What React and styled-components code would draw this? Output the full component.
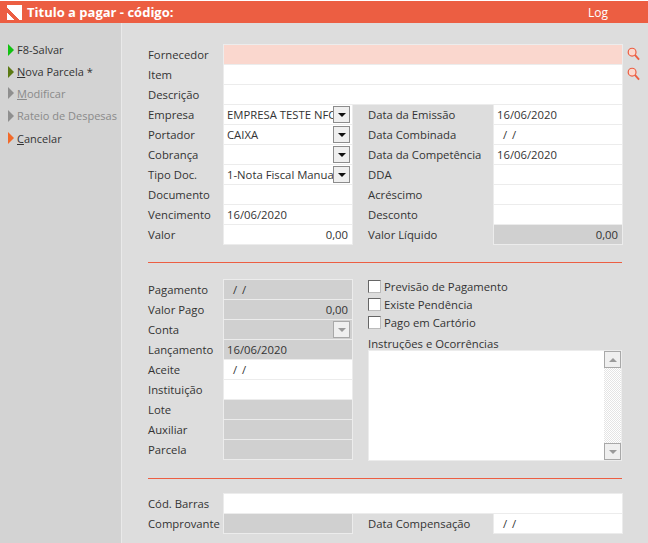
import React from 'react'
import styled, { createGlobalStyle } from 'styled-components'

const GlobalStyle = createGlobalStyle`
  html, body { margin: 0; padding: 0; background: #dddddd; }
  body { font-family: "Open Sans", "Liberation Sans", sans-serif; font-size: 11.3px; color: #333; }
`

const Page = styled.div`
  width: 648px;
  height: 543px;
  overflow: hidden;
  display: flex;
  flex-direction: column;
  padding-top: 1px;
  box-sizing: border-box;
  background: #fff;
`

const Header = styled.header`
  height: 22px;
  flex: none;
  background: #ec5e42;
  color: #fff;
  display: flex;
  align-items: center;
  padding: 0 40px 0 7px;
`

const HeaderTitle = styled.div`
  margin-left: 5px;
  flex: 1;
  font-weight: 700;
  font-size: 13px;
`

const HeaderLink = styled.div`
  font-size: 12px;
`

const Body = styled.div`
  flex: 1;
  display: flex;
  background: #dddddd;
`

const Sidebar = styled.nav`
  width: 121px;
  flex: none;
  background: #d3d3d3;
  border-right: 1px solid #e9e9e9;
  padding-top: 15px;
  font-size: 11px;
`

const MenuItem = styled.div`
  height: ${p => p.$height}px;
  display: flex;
  align-items: center;
  gap: 3px;
  padding-left: 8px;
  white-space: nowrap;
  color: ${p => (p.$disabled ? '#8a8a8a' : '#333')};
`

const Arrow = styled.span`
  width: 0;
  height: 0;
  border-style: solid;
  border-width: 6px 0 6px 6px;
  border-color: transparent transparent transparent ${p => p.$color};
`

const Main = styled.main`
  flex: 1;
  padding: 21px 0 0 26px;
`

const FormGrid = styled.div`
  display: grid;
  grid-template-columns: 75px 130px 15px 125px 130px 25px;
  grid-auto-rows: 20px;
`

const Label = styled.div`
  display: flex;
  align-items: center;
  white-space: nowrap;
  grid-column: ${p => p.$col || 'auto'};
`

const Field = styled.div`
  box-sizing: border-box;
  border: 1px solid #ececec;
  margin: 0 0 -1px 0;
  background: ${p => p.$bg || '#fff'};
  grid-column: ${p => p.$col || 'auto'};
  display: flex;
  align-items: center;
  justify-content: ${p => (p.$right ? 'flex-end' : 'flex-start')};
  padding: ${p => (p.$right ? '0 4px 0 0' : '0 0 0 3px')};
  position: relative;
  overflow: hidden;
  white-space: nowrap;
`

const DateMask = styled.span`
  padding-left: 6px;
  word-spacing: 2px;
`

const DropButton = styled.span`
  position: absolute;
  right: 2px;
  top: 1px;
  width: 17px;
  height: 17px;
  box-sizing: border-box;
  border: 1px solid ${p => (p.$disabled ? '#a8a8a8' : '#8c8c8c')};
  background: #efefef;
  display: flex;
  align-items: center;
  justify-content: center;
  &::after {
    content: '';
    border-style: solid;
    border-width: 4px 4px 0 4px;
    border-color: ${p => (p.$disabled ? '#9a9a9a' : '#111')} transparent transparent transparent;
  }
`

const SearchButton = styled.span`
  padding-left: 4px;
  display: flex;
  align-items: center;
  grid-column: 6;
`

const Divider = styled.div`
  width: 474px;
  height: 1px;
  margin: ${p => p.$margin};
  background: #ec5e42;
`

const SplitSection = styled.div`
  display: flex;
  gap: 15px;
`

const LeftGrid = styled.div`
  display: grid;
  grid-template-columns: 75px 130px;
  grid-auto-rows: 20px;
`

const RightColumn = styled.div`
  width: 254px;
  margin-top: -2px;
  display: flex;
  flex-direction: column;
`

const CheckRow = styled.label`
  height: 18px;
  display: flex;
  align-items: center;
  gap: 3px;
`

const CheckBox = styled.span`
  width: 11px;
  height: 11px;
  border: 1px solid;
  border-color: #666 #bbb #bbb #666;
  background: #fff;
  flex: none;
`

const AreaLabel = styled.div`
  margin-top: 4px;
  height: 15px;
  line-height: 17px;
`

const TextArea = styled.div`
  height: 111px;
  box-sizing: border-box;
  border: 1px solid #ececec;
  background: #fff;
  display: flex;
  justify-content: flex-end;
`

const ScrollBar = styled.div`
  width: 17px;
  display: flex;
  flex-direction: column;
  justify-content: space-between;
  background: repeating-conic-gradient(#e4e4e4 0 25%, #fff 0 50%) 0 0 / 2px 2px;
`

const ScrollButton = styled.span`
  height: 17px;
  box-sizing: border-box;
  border: 1px solid #a8a8a8;
  background: #efefef;
  display: flex;
  align-items: center;
  justify-content: center;
  &::after {
    content: '';
    border-style: solid;
    border-width: ${p => (p.$up ? '0 4px 4px 4px' : '4px 4px 0 4px')};
    border-color: ${p => (p.$up ? 'transparent transparent #9a9a9a transparent' : '#9a9a9a transparent transparent transparent')};
  }
`

const DISABLED = '#d0d0d0'
const PINK = '#fad7ce'

function SearchIcon() {
  return (
    <svg width="13" height="14" viewBox="0 0 14 15" fill="none">
      <circle cx="5.5" cy="5.5" r="4.2" fill="#fbd9cf" stroke="#ec5e42" strokeWidth="1.3" />
      <path d="M8.5 8.5 L13 13.5" stroke="#ec5e42" strokeWidth="2" />
    </svg>
  )
}

function Logo() {
  return (
    <svg width="15" height="15" viewBox="0 0 15 15" shapeRendering="crispEdges">
      <rect width="15" height="15" fill="#fff" />
      <path d="M0 3 L1 3 L1 4 L2 4 L2 5 L3 5 L3 6 L4 6 L4 7 L5 7 L5 8 L6 8 L6 9 L7 9 L7 10 L8 10 L8 11 L9 11 L9 12 L10 12 L10 13 L11 13 L11 14 L12 14 L12 15 L7 15 L0 8 Z" fill="#ec5e42" />
    </svg>
  )
}

const MENU = [
  { key: 'save', color: '#12c212', text: 'F8-Salvar', height: 23 },
  { key: 'new', color: '#5c7a14', first: 'N', text: 'ova Parcela *', height: 21 },
  { key: 'edit', color: '#8f8f8f', first: 'M', text: 'odificar', disabled: true, height: 22 },
  { key: 'split', color: '#8f8f8f', text: 'Rateio de Despesas', disabled: true, height: 23 },
  { key: 'cancel', color: '#f26a2a', first: 'C', text: 'ancelar', height: 22 },
]

const PAYMENT_ROWS = [
  { label: 'Pagamento', bg: DISABLED, mask: true },
  { label: 'Valor Pago', bg: DISABLED, value: '0,00', right: true },
  { label: 'Conta', bg: DISABLED, drop: true },
  { label: 'Lançamento', bg: DISABLED, value: '16/06/2020' },
  { label: 'Aceite', mask: true },
  { label: 'Instituição' },
  { label: 'Lote', bg: DISABLED },
  { label: 'Auxiliar', bg: DISABLED },
  { label: 'Parcela', bg: DISABLED },
]

export default function App() {
  return (
    <Page>
      <GlobalStyle />
      <Header>
        <Logo />
        <HeaderTitle>Titulo a pagar - código:</HeaderTitle>
        <HeaderLink>Log</HeaderLink>
      </Header>
      <Body>
        <Sidebar>
          {MENU.map(m => (
            <MenuItem key={m.key} $disabled={m.disabled} $height={m.height}>
              <Arrow $color={m.color} />
              <span>{m.first && <u>{m.first}</u>}{m.text}</span>
            </MenuItem>
          ))}
        </Sidebar>
        <Main>
          <FormGrid>
            <Label>Fornecedor</Label>
            <Field $col="2 / 6" $bg={PINK} />
            <SearchButton><SearchIcon /></SearchButton>

            <Label>Item</Label>
            <Field $col="2 / 6" />
            <SearchButton><SearchIcon /></SearchButton>

            <Label>Descrição</Label>
            <Field $col="2 / 6" />
            <span />

            <Label>Empresa</Label>
            <Field>EMPRESA TESTE NFC<DropButton /></Field>
            <Label $col="4">Data da Emissão</Label>
            <Field>16/06/2020</Field>
            <span />

            <Label>Portador</Label>
            <Field>CAIXA<DropButton /></Field>
            <Label $col="4">Data Combinada</Label>
            <Field><DateMask>/ /</DateMask></Field>
            <span />

            <Label>Cobrança</Label>
            <Field><DropButton /></Field>
            <Label $col="4">Data da Competência</Label>
            <Field>16/06/2020</Field>
            <span />

            <Label>Tipo Doc.</Label>
            <Field>1-Nota Fiscal Manual<DropButton /></Field>
            <Label $col="4">DDA</Label>
            <Field />
            <span />

            <Label>Documento</Label>
            <Field />
            <Label $col="4">Acréscimo</Label>
            <Field />
            <span />

            <Label>Vencimento</Label>
            <Field>16/06/2020</Field>
            <Label $col="4">Desconto</Label>
            <Field />
            <span />

            <Label>Valor</Label>
            <Field $right>0,00</Field>
            <Label $col="4">Valor Líquido</Label>
            <Field $right $bg={DISABLED}>0,00</Field>
          </FormGrid>

          <Divider $margin="18px 0 16px" />

          <SplitSection>
            <LeftGrid>
              {PAYMENT_ROWS.map(r => (
                <React.Fragment key={r.label}>
                  <Label>{r.label}</Label>
                  <Field $bg={r.bg} $right={r.right}>
                    {r.mask && <DateMask>/ /</DateMask>}
                    {r.value}
                    {r.drop && <DropButton $disabled />}
                  </Field>
                </React.Fragment>
              ))}
            </LeftGrid>
            <RightColumn>
              <CheckRow><CheckBox />Previsão de Pagamento</CheckRow>
              <CheckRow><CheckBox />Existe Pendência</CheckRow>
              <CheckRow><CheckBox />Pago em Cartório</CheckRow>
              <AreaLabel>Instruções e Ocorrências</AreaLabel>
              <TextArea>
                <ScrollBar>
                  <ScrollButton $up />
                  <ScrollButton />
                </ScrollBar>
              </TextArea>
            </RightColumn>
          </SplitSection>

          <Divider $margin="17px 0 14px" />

          <FormGrid>
            <Label>Cód. Barras</Label>
            <Field $col="2 / 6" />
            <span />

            <Label>Comprovante</Label>
            <Field $bg={DISABLED} />
            <Label $col="4">Data Compensação</Label>
            <Field><DateMask>/ /</DateMask></Field>
          </FormGrid>
        </Main>
      </Body>
    </Page>
  )
}
